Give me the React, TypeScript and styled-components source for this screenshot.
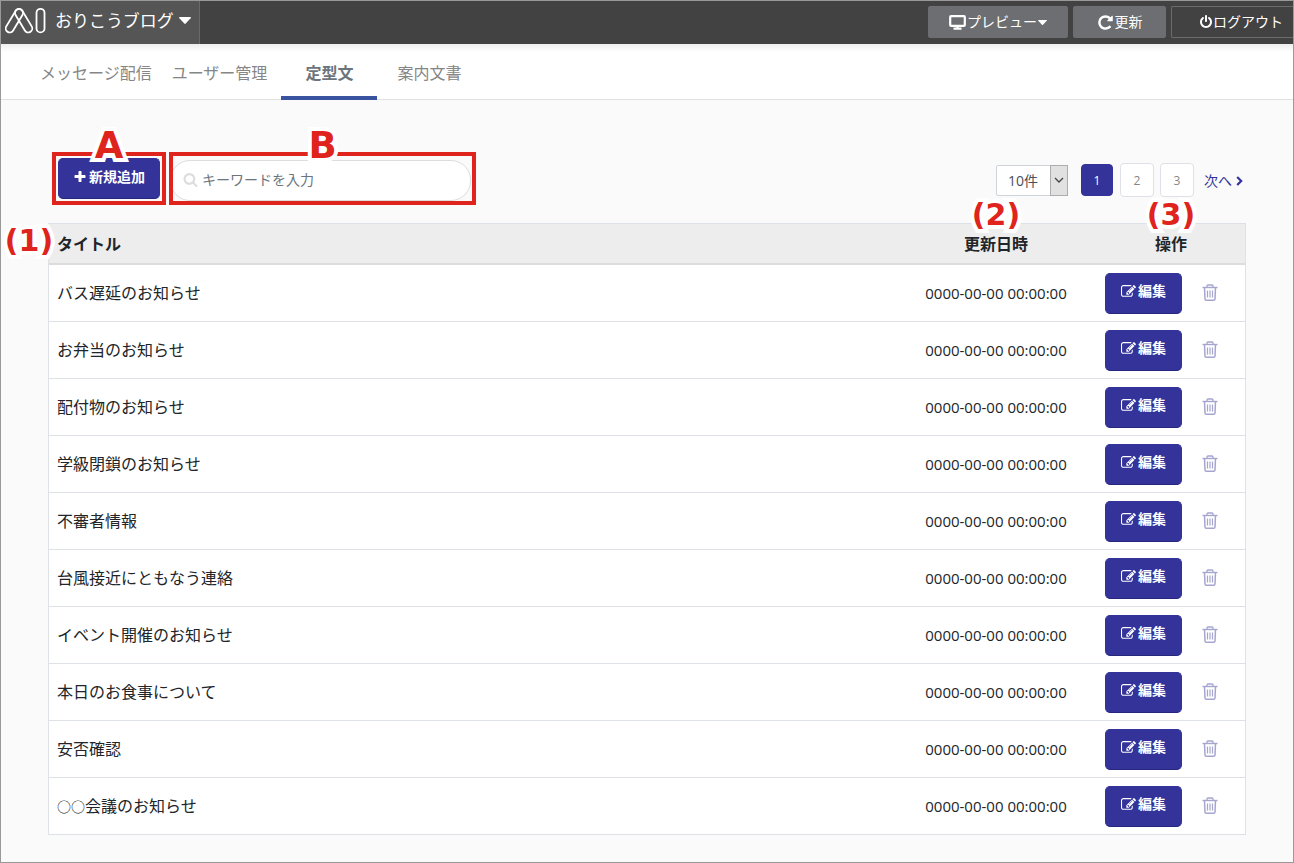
import React from "react";
import styled, { createGlobalStyle } from "styled-components";

const INDIGO = "#333399";
const RED = "#df231d";

const GlobalStyle = createGlobalStyle`
  *, *::before, *::after { box-sizing: border-box; }
  body {
    margin: 0;
    background: #fafafa;
    color: #212529;
    font-family: "Open Sans", "Noto Sans CJK JP", sans-serif;
    font-size: 16px;
    line-height: 24px;
  }
  button, input, select { font-family: inherit; }
`;

const Page = styled.div`
  min-height: 100vh;
  border: 1px solid #999;
  overflow: hidden;
`;

const TopBar = styled.header`
  display: flex;
  align-items: stretch;
  justify-content: space-between;
  height: 43px;
  background: #424242;
  color: #fff;
`;

const Brand = styled.button`
  display: flex;
  align-items: center;
  gap: 8px;
  width: 199px;
  padding: 0 4px 4px;
  border: 0;
  border-right: 1px solid #6a6a6a;
  background: #555;
  color: #fff;
  font-size: 17px;
  line-height: 24px;
  white-space: nowrap;
`;

const BrandName = styled.span`
  display: flex;
  align-items: center;
  gap: 5px;
`;

const TopActions = styled.div`
  display: flex;
  gap: 5px;
  padding-top: 5px;
`;

const TopButton = styled.button<{ $outline?: boolean; $width: number }>`
  display: flex;
  align-items: center;
  justify-content: ${(p) => (p.$outline ? "flex-end" : "center")};
  gap: ${(p) => (p.$outline ? 0 : 1)}px;
  width: ${(p) => p.$width}px;
  height: 32px;
  padding: 0 ${(p) => (p.$outline ? 10 : 0)}px 0 0;
  border: 1px solid ${(p) => (p.$outline ? "#6c6c6c" : "#6d6e71")};
  border-right-width: ${(p) => (p.$outline ? 0 : 1)}px;
  border-radius: ${(p) => (p.$outline ? "2px 0 0 2px" : "2px")};
  background: ${(p) => (p.$outline ? "transparent" : "#6d6e71")};
  color: #fff;
  font-size: 14px;
  line-height: 20px;
  white-space: nowrap;
`;

const Tabs = styled.nav`
  display: flex;
  height: 56px;
  padding: 0 29px;
  border-bottom: 1px solid #e1e1e1;
  background: linear-gradient(#eee, #fff 8px);
`;

const Tab = styled.a<{ $active?: boolean }>`
  position: relative;
  margin: ${(p) => (p.$active ? "0 10px 0 4px" : "0")};
  padding: 17px ${(p) => (p.$active ? 24 : 10)}px 0;
  color: ${(p) => (p.$active ? "#6c757d" : "#868686")};
  font-weight: ${(p) => (p.$active ? 700 : 400)};
  text-decoration: none;
  white-space: nowrap;

  &::after {
    content: "";
    display: ${(p) => (p.$active ? "block" : "none")};
    position: absolute;
    left: 0;
    right: 0;
    bottom: -1px;
    height: 4px;
    background: #3a53a0;
  }
`;

const Content = styled.main`
  padding: 52px 47px 24px;
`;

const Toolbar = styled.div`
  display: flex;
  align-items: flex-start;
  justify-content: space-between;
  margin-bottom: 18px;
`;

const ToolGroup = styled.div`
  display: flex;
  gap: 3px;
  padding-left: 4px;
`;

const Highlight = styled.div<{ $width: number; $left: number }>`
  position: relative;
  width: ${(p) => p.$width}px;
  height: 53px;
  padding: 6px 5px 6px ${(p) => p.$left}px;

  &::after {
    content: "";
    position: absolute;
    inset: 0;
    border: 4px solid ${RED};
    pointer-events: none;
  }
`;

const Mark = styled.span<{ $small?: boolean }>`
  position: absolute;
  z-index: 2;
  left: 50%;
  top: ${(p) => (p.$small ? -29 : -26)}px;
  transform: translateX(-50%);
  color: ${RED};
  font-family: "DejaVu Sans", sans-serif;
  font-size: ${(p) => (p.$small ? 30 : 37)}px;
  font-weight: 700;
  line-height: 40px;
  white-space: nowrap;
  -webkit-text-stroke: 8px #fff;
  stroke-linejoin: round;
  paint-order: stroke fill;
  pointer-events: none;
`;

const SideMark = styled(Mark)`
  left: -20px;
  top: -3px;
`;

const SolidButton = styled.button<{ $width: number }>`
  display: inline-flex;
  align-items: center;
  justify-content: center;
  gap: 2px;
  width: ${(p) => p.$width}px;
  height: 41px;
  padding: 0 0 4px;
  border: 1px solid ${INDIGO};
  border-bottom-color: #26267c;
  border-radius: 5px;
  background: ${INDIGO};
  color: #fff;
  font-size: 14px;
  font-weight: 700;
  line-height: 20px;
  white-space: nowrap;
`;

const SearchBox = styled.label`
  display: flex;
  align-items: center;
  gap: 4px;
  height: 41px;
  margin-top: 2px;
  padding: 0 12px 2px;
  border: 1px solid #ddd;
  border-radius: 20px;
  background: #fff;
  color: #ddd;
`;

const SearchInput = styled.input`
  flex: 1;
  min-width: 0;
  padding: 0;
  border: 0;
  outline: 0;
  background: transparent;
  font-size: 14px;
  line-height: 20px;
  &::placeholder { color: #6c757d; opacity: 1; }
`;

const Pager = styled.div`
  display: flex;
  align-items: center;
  gap: 6px;
  padding: 11px 3px 0 0;
`;

const SelectWrap = styled.div`
  position: relative;
  width: 72px;
  height: 31px;
  margin-right: 7px;
`;

const SelectArrow = styled.span`
  position: absolute;
  top: 0;
  right: 0;
  display: flex;
  align-items: center;
  justify-content: center;
  width: 18px;
  height: 31px;
  border: 1px solid #adadad;
  background: #e1e1e1;
  pointer-events: none;
`;

const CountSelect = styled.select`
  appearance: none;
  width: 100%;
  height: 100%;
  padding: 0 0 0 11px;
  border: 1px solid #ced4da;
  border-radius: 2px;
  background: #fff;
  color: #495057;
  font-size: 14px;
`;

const PageLink = styled.a<{ $current?: boolean }>`
  display: flex;
  align-items: center;
  justify-content: center;
  width: ${(p) => (p.$current ? 32 : 34)}px;
  height: ${(p) => (p.$current ? 32 : 34)}px;
  margin-right: ${(p) => (p.$current ? 1 : 0)}px;
  padding-top: 2px;
  border: 1px solid ${(p) => (p.$current ? INDIGO : "#dee2e6")};
  border-radius: 4px;
  background: ${(p) => (p.$current ? INDIGO : "#fff")};
  color: ${(p) => (p.$current ? "#fff" : "#868686")};
  font-size: 12px;
  text-decoration: none;
`;

const NextLink = styled.a`
  display: flex;
  align-items: center;
  gap: 4px;
  margin-left: 4px;
  padding-top: 2px;
  color: ${INDIGO};
  font-size: 14px;
  text-decoration: none;
  white-space: nowrap;
`;

const Table = styled.table`
  width: 100%;
  table-layout: fixed;
  border-collapse: separate;
  border-spacing: 0;
  border: 1px solid #dee2e6;
  border-bottom: 0;
  background: #fff;
`;

const HeadCell = styled.th<{ $width?: number }>`
  position: relative;
  width: ${(p) => (p.$width ? p.$width + "px" : "auto")};
  height: 41px;
  padding: 0 8px;
  border-bottom: 2px solid #dcdcdc;
  background: #ededed;
  text-align: ${(p) => (p.$width ? "center" : "left")};
`;

const Cell = styled.td<{ $center?: boolean }>`
  height: 57px;
  padding: 0 8px;
  border-bottom: 1px solid #dee2e6;
  text-align: ${(p) => (p.$center ? "center" : "left")};
  white-space: nowrap;
`;

const Time = styled.time`
  font-size: 15px;
`;

const Placeholder = styled.span`
  font-size: 14px;
`;

const RowActions = styled.div`
  display: flex;
  align-items: center;
  gap: 20px;
`;

const TrashButton = styled.button`
  display: flex;
  padding: 0 0 2px;
  border: 0;
  background: none;
  color: #a5a5d0;
`;

const paths = {
  edit: "M888 1184l116-116-152-152-116 116v56h96v96h56zm440-720q-16-16-33 1l-350 350q-17 17-1 33t33-1l350-350q17-17 1-33zm80 594v190q0 119-84.5 203.5t-203.5 84.5h-832q-119 0-203.5-84.5t-84.5-203.5v-832q0-119 84.5-203.5t203.5-84.5h832q63 0 117 25 15 7 18 23 3 17-9 29l-49 49q-14 14-32 8-23-6-45-6h-832q-66 0-113 47t-47 113v832q0 66 47 113t113 47h832q66 0 113-47t47-113v-126q0-13 9-22l64-64q15-15 35-7t20 29zm-96-738l288 288-672 672h-288v-288zm444 132l-92 92-288-288 92-92q28-28 68-28t68 28l152 152q28 28 28 68t-28 68z",
  search: "M1216 832q0-185-131.5-316.5t-316.5-131.5-316.5 131.5-131.5 316.5 131.5 316.5 316.5 131.5 316.5-131.5 131.5-316.5zm512 832q0 52-38 90t-90 38q-54 0-90-38l-343-342q-179 124-399 124-143 0-273.5-55.5t-225-150-150-225-55.5-273.5 55.5-273.5 150-225 225-150 273.5-55.5 273.5 55.5 225 150 150 225 55.5 273.5q0 220-124 399l343 343q37 37 37 90z",
  plus: "M1600 736v192q0 40-28 68t-68 28h-416v416q0 40-28 68t-68 28h-192q-40 0-68-28t-28-68v-416h-416q-40 0-68-28t-28-68v-192q0-40 28-68t68-28h416v-416q0-40 28-68t68-28h192q40 0 68 28t28 68v416h416q40 0 68 28t28 68z",
  reload: "M1664 256v448q0 26-19 45t-45 19h-448q-42 0-59-40-17-39 14-69l138-138q-148-137-349-137-104 0-198.5 40.5t-163.5 109.5-109.5 163.5-40.5 198.5 40.5 198.5 109.5 163.5 163.5 109.5 198.5 40.5q119 0 225-52t179-147q7-10 23-12 15 0 25 9l137 138q9 8 9.5 20.5t-7.5 22.5q-109 132-264 204.5t-327 72.5q-156 0-298-61t-245-164-164-245-61-298 61-298 164-245 245-164 298-61q147 0 284.5 55.5t244.5 156.5l130-129q29-31 70-14 39 17 39 59z",
  power: "M1664 896q0 156-61 298t-164 245-245 164-298 61-298-61-245-164-164-245-61-298q0-182 80.5-343t226.5-270q43-32 95.5-25t83.5 50q32 42 24.5 94.5t-49.5 84.5q-98 74-151.5 181t-53.5 228q0 104 40.5 198.5t109.5 163.5 163.5 109.5 198.5 40.5 198.5-40.5 163.5-109.5 109.5-163.5 40.5-198.5q0-121-53.5-228t-151.5-181q-42-32-49.5-84.5t24.5-94.5q31-43 84-50t95 25q146 109 226.5 270t80.5 343zm-640-768v640q0 52-38 90t-90 38-90-38-38-90v-640q0-52 38-90t90-38 90 38 38 90z",
};

const Icon = ({ name, size }: { name: keyof typeof paths; size: number }) => (
  <svg width={size} height={size} viewBox="0 0 1792 1792" fill="currentColor" aria-hidden="true">
    <path d={paths[name]} />
  </svg>
);

const Desktop = () => (
  <svg width="17" height="15" viewBox="0 0 17 15" fill="none" stroke="currentColor" aria-hidden="true">
    <rect x="1.200" y="1.200" width="14.600" height="9.600" rx="0.800" strokeWidth="2.200" />
    <path d="M8.500 11v2.500M4.500 13.700h8" strokeWidth="2.200" />
  </svg>
);

const Caret = ({ width, height }: { width: number; height: number }) => (
  <svg width={width} height={height} viewBox="0 0 12 7" preserveAspectRatio="none" fill="currentColor" aria-hidden="true">
    <path d="M0.6 0h10.8q.9.4.2 1.2L6.7 6.6q-.7.7-1.4 0L.4 1.2Q-.2.4.6 0z" />
  </svg>
);

const Logo = () => (
  <svg width="42" height="28" viewBox="0 0 42 28" fill="none" stroke="#fff" strokeWidth="1.8" aria-hidden="true">
    <rect x="-4" y="-4" width="8" height="26" rx="4" transform="translate(14 6) rotate(31)" />
    <rect x="-4" y="-4" width="8" height="26" rx="4" transform="translate(14 6) rotate(-31)" />
    <rect x="31.500" y="1.800" width="8" height="23.600" rx="4" />
  </svg>
);

const Trash = () => (
  <svg width="16" height="17" viewBox="0 0 16 17" fill="none" stroke="currentColor" aria-hidden="true">
    <path d="M0.500 3.500h15" strokeWidth="1.400" />
    <path d="M5 3.500V2q0-1 1-1h4q1 0 1 1v1.500" strokeWidth="1.300" />
    <path d="M2.500 3.500l.5 11.500q.1 1.200 1.200 1.200h7.600q1.100 0 1.200-1.200l.5-11.500" strokeWidth="1.500" />
    <path d="M5.500 6.500v7M8 6.500v7M10.500 6.500v7" strokeWidth="1.200" />
  </svg>
);

const titles = [
  { text: "バス遅延のお知らせ" },
  { text: "お弁当のお知らせ" },
  { text: "配付物のお知らせ" },
  { text: "学級閉鎖のお知らせ" },
  { text: "不審者情報" },
  { text: "台風接近にともなう連絡" },
  { text: "イベント開催のお知らせ" },
  { text: "本日のお食事について" },
  { text: "安否確認" },
  { blank: "○○", text: "会議のお知らせ" },
];

export default function App() {
  return (
    <Page>
      <GlobalStyle />
      <TopBar>
        <Brand type="button">
          <Logo />
          <BrandName>
            おりこうブログ
            <Caret width={12} height={7} />
          </BrandName>
        </Brand>
        <TopActions>
          <TopButton type="button" $width={140}>
            <Desktop />
            プレビュー
            <Caret width={9} height={5} />
          </TopButton>
          <TopButton type="button" $width={93}>
            <Icon name="reload" size={17} />
            更新
          </TopButton>
          <TopButton type="button" $outline $width={122}>
            <Icon name="power" size={14} />
            ログアウト
          </TopButton>
        </TopActions>
      </TopBar>
      <Tabs>
        <Tab href="#messages">メッセージ配信</Tab>
        <Tab href="#users">ユーザー管理</Tab>
        <Tab href="#templates" $active aria-current="page">定型文</Tab>
        <Tab href="#documents">案内文書</Tab>
      </Tabs>
      <Content>
        <Toolbar>
          <ToolGroup>
            <Highlight $width={114} $left={6}>
              <SolidButton type="button" $width={102}>
                <Icon name="plus" size={14} />
                新規追加
              </SolidButton>
              <Mark>A</Mark>
            </Highlight>
            <Highlight $width={307} $left={1}>
              <SearchBox>
                <Icon name="search" size={15} />
                <SearchInput type="search" placeholder="キーワードを入力" aria-label="キーワードを入力" />
              </SearchBox>
              <Mark>B</Mark>
            </Highlight>
          </ToolGroup>
          <Pager>
            <SelectWrap>
              <CountSelect aria-label="表示件数" defaultValue="10">
                <option value="10">10件</option>
                <option value="20">20件</option>
              </CountSelect>
              <SelectArrow>
                <svg width="10" height="6" viewBox="0 0 10 6" fill="none" stroke="#444" strokeWidth="1.3" aria-hidden="true">
                  <path d="M1 1l4 4 4-4" />
                </svg>
              </SelectArrow>
            </SelectWrap>
            <PageLink href="#1" $current aria-current="page">1</PageLink>
            <PageLink href="#2">2</PageLink>
            <PageLink href="#3">3</PageLink>
            <NextLink href="#next">
              次へ
              <svg width="7" height="10" viewBox="0 0 7 10" fill="none" stroke="currentColor" strokeWidth="2.2" aria-hidden="true">
                <path d="M1.200 1l4 4-4 4" />
              </svg>
            </NextLink>
          </Pager>
        </Toolbar>
        <Table>
          <thead>
            <tr>
              <HeadCell scope="col">
                タイトル
                <SideMark $small>(1)</SideMark>
              </HeadCell>
              <HeadCell scope="col" $width={202}>
                更新日時
                <Mark $small>(2)</Mark>
              </HeadCell>
              <HeadCell scope="col" $width={148}>
                操作
                <Mark $small>(3)</Mark>
              </HeadCell>
            </tr>
          </thead>
          <tbody>
            {titles.map(({ blank, text }) => (
              <tr key={text}>
                <Cell>
                  {blank && <Placeholder>{blank}</Placeholder>}
                  {text}
                </Cell>
                <Cell $center>
                  <Time>0000-00-00 00:00:00</Time>
                </Cell>
                <Cell>
                  <RowActions>
                    <SolidButton type="button" $width={77}>
                      <Icon name="edit" size={15} />
                      編集
                    </SolidButton>
                    <TrashButton type="button" aria-label="削除">
                      <Trash />
                    </TrashButton>
                  </RowActions>
                </Cell>
              </tr>
            ))}
          </tbody>
        </Table>
      </Content>
    </Page>
  );
}
